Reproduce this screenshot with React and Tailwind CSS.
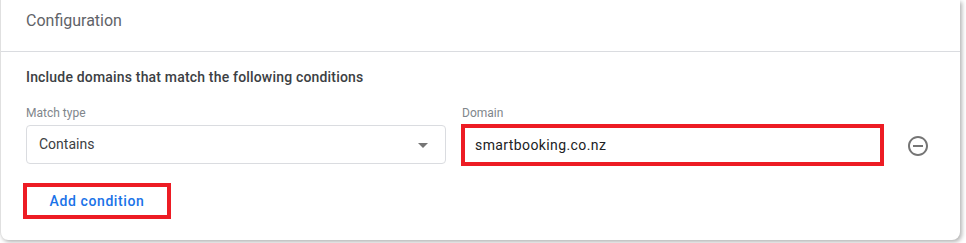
export default function App() {
  return (
    <div className="w-[966px] h-[243px] bg-white overflow-hidden" style={{ fontFamily: 'Roboto, "Liberation Sans", sans-serif' }}>
      <div className="w-[960px] h-[240px] bg-white border-l border-[#e0e0e0] rounded-b-lg shadow-[2px_2px_4px_rgba(0,0,0,0.3)]">
        {/* header */}
        <div className="h-[52px] pt-[11px] px-[25px] border-b border-[#dadce0]">
          <div className="text-[16px] leading-5 text-[#5f6368]">Configuration</div>
        </div>

        <div className="px-[25px] pt-[15px]">
          <div className="text-[14px] leading-5 font-medium tracking-[0.18px] text-[#3c4043]">
            Include domains that match the following conditions
          </div>

          <div className="flex items-start mt-[18px]">
            <div className="w-[420px]">
              <div className="text-[12px] leading-4 text-[#80868b] mb-[4px]">Match type</div>
              <div className="h-[39px] border border-[#dadce0] rounded flex items-center justify-between pl-[12px] pr-[12px]">
                <span className="text-[14px] text-[#3c4043]">Contains</span>
                <svg width="24" height="24" viewBox="0 0 24 24" className="mr-[-2px]">
                  <path d="M7 10l5 5 5-5z" fill="#757575" />
                </svg>
              </div>
            </div>

            <div className="ml-[15px] w-[423px]">
              <div className="text-[12px] leading-4 text-[#80868b] mb-[3px] pl-[1px]">Domain</div>
              <div className="h-[42px] border-4 border-[#ed1c24] flex items-center pl-[10px]">
                <span className="text-[14px] tracking-[0.4px] text-[#202124]">smartbooking.co.nz</span>
              </div>
            </div>

            <svg width="24" height="24" viewBox="0 0 24 24" className="ml-[22px] mt-[29px]">
              <path
                d="M7 11v2h10v-2H7zm5-9C6.48 2 2 6.48 2 12s4.48 10 10 10 10-4.48 10-10S17.52 2 12 2zm0 18c-4.41 0-8-3.59-8-8s3.59-8 8-8 8 3.59 8 8-3.59 8-8 8z"
                fill="#757575"
              />
            </svg>
          </div>

          <div className="mt-[17px] ml-[-3px] w-[148px] h-[36px] border-4 border-[#ed1c24] flex items-center justify-center">
            <span className="text-[14px] font-medium tracking-[0.6px] text-[#1a73e8]">Add condition</span>
          </div>
        </div>
      </div>
    </div>
  );
}
